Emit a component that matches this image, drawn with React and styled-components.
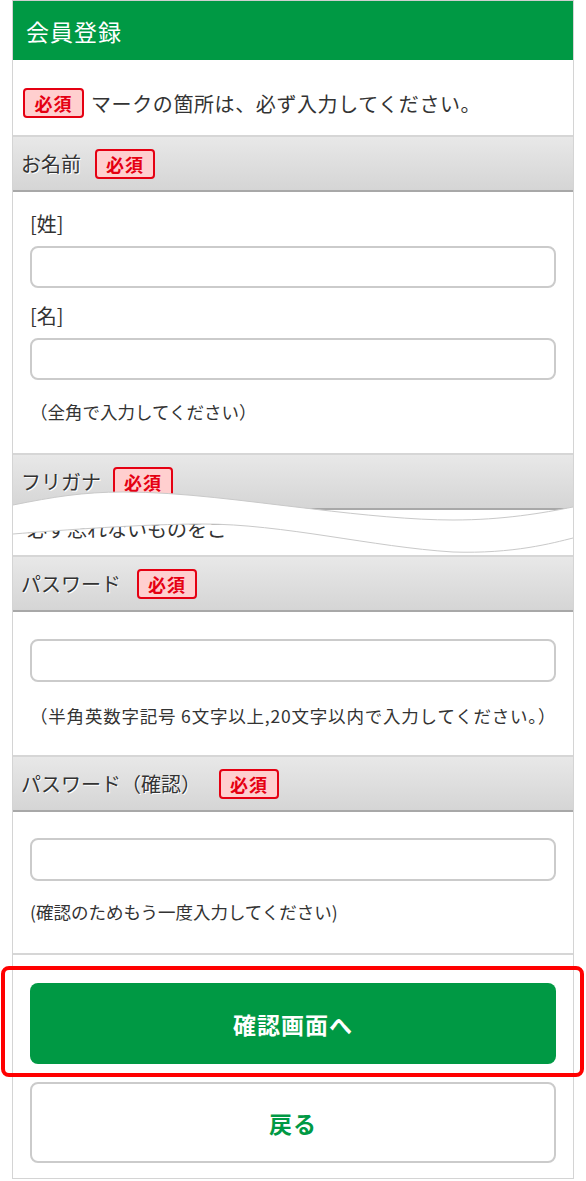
import React from 'react'
import styled, { createGlobalStyle } from 'styled-components'

const GlobalStyle = createGlobalStyle`
  body {
    margin: 0;
    background: #fff;
    font-family: "Noto Sans CJK JP", "Noto Sans", sans-serif;
    color: #333;
  }
  * { box-sizing: border-box; }
`

const GREEN = '#009944'

const Page = styled.div`
  margin: 0 12px;
  border-left: 1px solid #d4d4d4;
  border-right: 1px solid #d4d4d4;
  border-bottom: 1px solid #d4d4d4;
`

const Header = styled.h1`
  margin: 0;
  height: 60px;
  border-top: 1px solid #cfcfcf;
  background: ${GREEN};
  color: #fff;
  font-size: 23px;
  font-weight: 400;
  padding-left: 13px;
  display: flex;
  align-items: center;
  letter-spacing: 1px;
`

const Notice = styled.div`
  height: 77px;
  padding: 11px 0 0 10px;
  display: flex;
  align-items: center;
  gap: 7px;
  font-size: 20px;
  letter-spacing: 0.6px;
  border-bottom: 2px solid #d6d6d6;
`

const Badge = styled.span`
  display: inline-flex;
  align-items: center;
  justify-content: center;
  width: ${({ $w }) => $w || 60}px;
  height: 30px;
  flex-shrink: 0;
  border: 2px solid #e50012;
  border-radius: 4px;
  background: #ffcfcf;
  color: #e50012;
  font-size: 18px;
  font-weight: 700;
  letter-spacing: 1px;
  text-shadow: none;
`

const Section = styled.section`
  position: relative;
  border-bottom: 2px solid #d6d6d6;
`

const SectionHead = styled.div`
  height: 55px;
  display: flex;
  align-items: center;
  gap: ${({ $gap }) => $gap || 15}px;
  padding-left: 8px;
  background: linear-gradient(#e8e8e8, #d5d5d5);
  border-bottom: 2px solid #a8a8a8;
  font-size: 20px;
  text-shadow: 1px 1px 0 #fff;
`

const SectionBody = styled.div`
  padding: ${({ $pad }) => $pad || '20px 17px 29px'};
  display: flex;
  flex-direction: column;
`

const FieldLabel = styled.div`
  font-size: 20px;
  line-height: 24px;
  margin-top: ${({ $mt }) => $mt || 0}px;
`

const Input = styled.input`
  display: block;
  width: 100%;
  height: ${({ $h }) => $h || 42}px;
  margin-top: ${({ $mt }) => $mt || 0}px;
  border: 2px solid #cbcbcb;
  border-radius: 8px;
  background: #fff;
  font-size: 18px;
  padding: 0 10px;
  outline: none;
`

const Note = styled.div`
  font-size: 17.5px;
  line-height: 24px;
  margin-top: ${({ $mt }) => $mt || 20}px;
  letter-spacing: ${({ $ls }) => $ls || 0}px;
  white-space: nowrap;
`

const CutBody = styled.div`
  height: 45px;
  padding: 5px 0 0 14px;
  font-size: 20px;
  line-height: 28px;
  overflow: hidden;
  white-space: nowrap;
`

const Tear = styled.svg`
  position: absolute;
  left: 0;
  top: 0;
  width: 100%;
  height: 100px;
  pointer-events: none;
`

const Actions = styled.div`
  padding: 28px 17px 15px;
  display: flex;
  flex-direction: column;
  gap: 18px;
`

const Highlight = styled.div`
  position: relative;
`

const Frame = styled.div`
  position: absolute;
  top: -17px;
  bottom: -13px;
  left: -29px;
  right: -28px;
  border: 4px solid #ff0000;
  border-radius: 8px;
  pointer-events: none;
`

const Button = styled.button`
  width: 100%;
  height: 81px;
  border-radius: 8px;
  font-family: inherit;
  font-size: 23px;
  font-weight: 700;
  letter-spacing: 1px;
  cursor: pointer;
  border: ${({ $primary }) => ($primary ? 'none' : '2px solid #cbcbcb')};
  background: ${({ $primary }) => ($primary ? GREEN : '#fff')};
  color: ${({ $primary }) => ($primary ? '#fff' : GREEN)};
`

// upper edge of the cut (bottom of the visible header) and lower edge (top of the remaining content)
const waveA = 'M0,50 C40,42 70,37 110,37 C170,37 230,46 300,54 C350,60 400,65 440,65 C490,65 530,58 560,52'
const waveB = 'M0,79 C50,75 130,69 190,69 C270,69 360,92 440,97 C500,99 540,88 560,83'
const gap =
  waveA +
  ' L560,83 C540,88 500,99 440,97 C360,92 270,69 190,69 C130,69 50,75 0,79 Z'

const App = () => {
  return (
    <>
      <GlobalStyle />
      <Page>
        <Header>会員登録</Header>
        <Notice>
          <Badge $w={61}>必須</Badge>
          マークの箇所は、必ず入力してください。
        </Notice>

        <Section>
          <SectionHead $gap={14}>
            お名前<Badge>必須</Badge>
          </SectionHead>
          <SectionBody>
            <FieldLabel>[姓]</FieldLabel>
            <Input $mt={10} />
            <FieldLabel $mt={16}>[名]</FieldLabel>
            <Input $mt={10} />
            <Note>（全角で入力してください）</Note>
          </SectionBody>
        </Section>

        <Section>
          <SectionHead $gap={12}>
            フリガナ<Badge>必須</Badge>
          </SectionHead>
          <CutBody>必ず忘れないものをご</CutBody>
          <Tear viewBox="0 0 560 100" preserveAspectRatio="none">
            <path d={gap} fill="#fff" />
            <path d={waveA} fill="none" stroke="#c9c9c9" strokeWidth="1" />
            <path d={waveB} fill="none" stroke="#c9c9c9" strokeWidth="1" />
          </Tear>
        </Section>

        <Section>
          <SectionHead $gap={16}>
            パスワード<Badge>必須</Badge>
          </SectionHead>
          <SectionBody $pad="27px 17px 27px">
            <Input $h={43} />
            <Note $mt={22} $ls={0.8}>（半角英数字記号 6文字以上,20文字以内で入力してください。）</Note>
          </SectionBody>
        </Section>

        <Section>
          <SectionHead $gap={18}>
            パスワード（確認）<Badge>必須</Badge>
          </SectionHead>
          <SectionBody $pad="26px 17px 29px">
            <Input $h={43} />
            <Note $mt={19}>(確認のためもう一度入力してください)</Note>
          </SectionBody>
        </Section>

        <Actions>
          <Highlight>
            <Button $primary>確認画面へ</Button>
            <Frame />
          </Highlight>
          <Button>戻る</Button>
        </Actions>
      </Page>
    </>
  )
}

export default App
